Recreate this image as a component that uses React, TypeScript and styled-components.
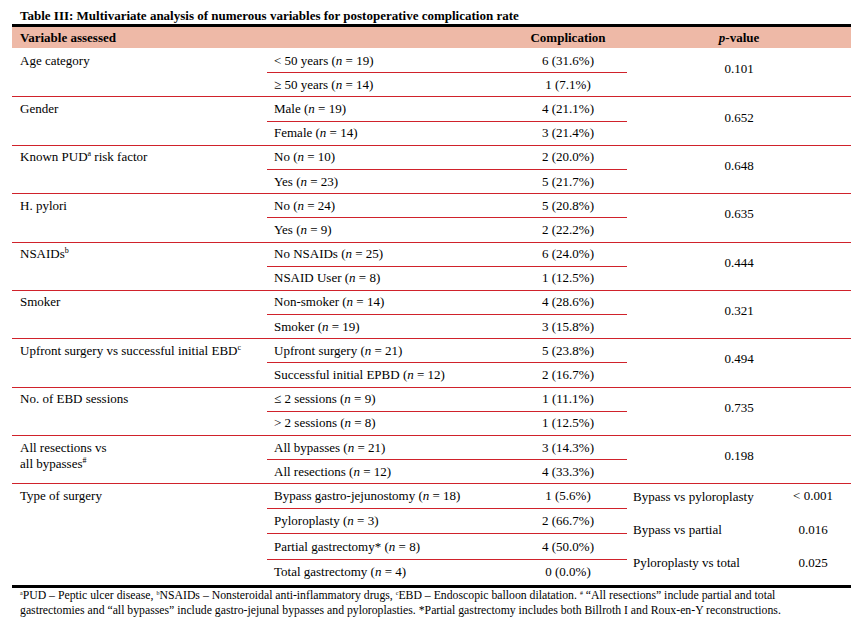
import React from "react";
import styled, { createGlobalStyle } from "styled-components";

const GlobalStyle = createGlobalStyle`
  html, body {
    margin: 0;
    padding: 0;
    background: #ffffff;
  }
  body {
    font-family: "Liberation Serif", "Times New Roman", serif;
    color: #000;
  }
`;

const RED = "#d0222b";
const PINK = "#eeb9a7";

const Page = styled.div`
  width: 839px;
  padding: 7px 12px 0;
`;

const Caption = styled.div`
  font-size: 13px;
  font-weight: bold;
  line-height: 17px;
  padding-left: 8px;
`;

const Frame = styled.div`
  border-top: 3px solid #000;
  border-bottom: 3px solid #000;
`;

const Table = styled.table`
  width: 839px;
  table-layout: fixed;
  border-collapse: separate;
  border-spacing: 0;
  font-size: 13px;
  line-height: 16px;
`;

const HeadRow = styled.tr`
  background: ${PINK};
`;

const HeadCell = styled.th<{ $align: "left" | "center" }>`
  text-align: ${(p) => p.$align};
  font-weight: bold;
  padding: 2.5px 8px;
  height: 16px;
`;

const LabelCell = styled.td<{ $line: boolean }>`
  vertical-align: top;
  padding: 3.6px 8px;
  border-top: 1px solid ${(p) => (p.$line ? RED : "transparent")};
`;

const OptionCell = styled.td<{ $line: boolean }>`
  vertical-align: middle;
  padding: 3.6px 7px;
  white-space: nowrap;
  border-top: 1px solid ${(p) => (p.$line ? RED : "transparent")};
`;

const CountCell = styled(OptionCell)`
  text-align: center;
  padding: 3.6px 0;
`;

const PCell = styled.td<{ $line: boolean }>`
  vertical-align: middle;
  text-align: center;
  padding: 0 0 7px;
  border-top: 1px solid ${(p) => (p.$line ? RED : "transparent")};
`;

const CompareCell = styled.td<{ $line?: boolean; $align: "left" | "center"; $stack?: boolean }>`
  vertical-align: ${(p) => (p.$stack ? "top" : "middle")};
  text-align: ${(p) => p.$align};
  padding: ${(p) => (p.$stack ? "13.5px" : "3px")} ${(p) => (p.$align === "left" ? "0 0 6px" : "0")};
  white-space: nowrap;
  border-top: 1px solid ${(p) => (p.$line ? RED : "transparent")};
`;

const SecondLine = styled.div`
  margin-top: 17px;
`;

const Sup = styled.sup`
  font-size: 8px;
  line-height: 0;
  vertical-align: 5px;
`;

const Notes = styled.div`
  font-size: 11.75px;
  line-height: 15px;
  padding: 0 0 0 8px;
`;

const NoteSup = styled.sup`
  font-size: 6px;
  line-height: 0;
  vertical-align: 4px;
`;

type Group = {
  label: React.ReactNode;
  rows: [React.ReactNode, string][];
  p: string;
};

const groups: Group[] = [
  {
    label: "Age category",
    rows: [
      [<>&lt; 50 years (<i>n</i> = 19)</>, "6 (31.6%)"],
      [<>≥ 50 years (<i>n</i> = 14)</>, "1 (7.1%)"],
    ],
    p: "0.101",
  },
  {
    label: "Gender",
    rows: [
      [<>Male (<i>n</i> = 19)</>, "4 (21.1%)"],
      [<>Female (<i>n</i> = 14)</>, "3 (21.4%)"],
    ],
    p: "0.652",
  },
  {
    label: (
      <>
        Known PUD<Sup>a</Sup> risk factor
      </>
    ),
    rows: [
      [<>No (<i>n</i> = 10)</>, "2 (20.0%)"],
      [<>Yes (<i>n</i> = 23)</>, "5 (21.7%)"],
    ],
    p: "0.648",
  },
  {
    label: "H. pylori",
    rows: [
      [<>No (<i>n</i> = 24)</>, "5 (20.8%)"],
      [<>Yes (<i>n</i> = 9)</>, "2 (22.2%)"],
    ],
    p: "0.635",
  },
  {
    label: (
      <>
        NSAIDs<Sup>b</Sup>
      </>
    ),
    rows: [
      [<>No NSAIDs (<i>n</i> = 25)</>, "6 (24.0%)"],
      [<>NSAID User (<i>n</i> = 8)</>, "1 (12.5%)"],
    ],
    p: "0.444",
  },
  {
    label: "Smoker",
    rows: [
      [<>Non-smoker (<i>n</i> = 14)</>, "4 (28.6%)"],
      [<>Smoker (<i>n</i> = 19)</>, "3 (15.8%)"],
    ],
    p: "0.321",
  },
  {
    label: (
      <>
        Upfront surgery vs successful initial EBD<Sup>c</Sup>
      </>
    ),
    rows: [
      [<>Upfront surgery (<i>n</i> = 21)</>, "5 (23.8%)"],
      [<>Successful initial EPBD (<i>n</i> = 12)</>, "2 (16.7%)"],
    ],
    p: "0.494",
  },
  {
    label: "No. of EBD sessions",
    rows: [
      [<>≤ 2 sessions (<i>n</i> = 9)</>, "1 (11.1%)"],
      [<>&gt; 2 sessions (<i>n</i> = 8)</>, "1 (12.5%)"],
    ],
    p: "0.735",
  },
  {
    label: (
      <>
        All resections vs
        <br />
        all bypasses<Sup>#</Sup>
      </>
    ),
    rows: [
      [<>All bypasses (<i>n</i> = 21)</>, "3 (14.3%)"],
      [<>All resections (<i>n</i> = 12)</>, "4 (33.3%)"],
    ],
    p: "0.198",
  },
];

const surgery: [React.ReactNode, string][] = [
  [<>Bypass gastro-jejunostomy (<i>n</i> = 18)</>, "1 (5.6%)"],
  [<>Pyloroplasty (<i>n</i> = 3)</>, "2 (66.7%)"],
  [<>Partial gastrectomy* (<i>n</i> = 8)</>, "4 (50.0%)"],
  [<>Total gastrectomy (<i>n</i> = 4)</>, "0 (0.0%)"],
];

export default function App() {
  return (
    <>
      <GlobalStyle />
      <Page>
        <Caption>Table III: Multivariate analysis of numerous variables for postoperative complication rate</Caption>
        <Frame>
          <Table>
            <colgroup>
              <col style={{ width: 255 }} />
              <col style={{ width: 242 }} />
              <col style={{ width: 118 }} />
              <col style={{ width: 148 }} />
              <col style={{ width: 76 }} />
            </colgroup>
            <thead>
              <HeadRow>
                <HeadCell $align="left" colSpan={2}>
                  Variable assessed
                </HeadCell>
                <HeadCell $align="center">Complication</HeadCell>
                <HeadCell $align="center" colSpan={2}>
                  <i>p</i>-value
                </HeadCell>
              </HeadRow>
            </thead>
            <tbody>
              {groups.map((g, gi) => (
                <React.Fragment key={gi}>
                  <tr>
                    <LabelCell rowSpan={2} $line={gi > 0}>
                      {g.label}
                    </LabelCell>
                    <OptionCell $line={gi > 0}>{g.rows[0][0]}</OptionCell>
                    <CountCell $line={gi > 0}>{g.rows[0][1]}</CountCell>
                    <PCell rowSpan={2} colSpan={2} $line={gi > 0}>
                      {g.p}
                    </PCell>
                  </tr>
                  <tr>
                    <OptionCell $line>{g.rows[1][0]}</OptionCell>
                    <CountCell $line>{g.rows[1][1]}</CountCell>
                  </tr>
                </React.Fragment>
              ))}
              {surgery.map((r, ri) => (
                <tr key={`s${ri}`}>
                  {ri === 0 && (
                    <LabelCell rowSpan={4} $line>
                      Type of surgery
                    </LabelCell>
                  )}
                  <OptionCell $line>{r[0]}</OptionCell>
                  <CountCell $line>{r[1]}</CountCell>
                  {ri === 0 && (
                    <>
                      <CompareCell $line $align="left">
                        Bypass vs pyloroplasty
                      </CompareCell>
                      <CompareCell $line $align="center">
                        &lt; 0.001
                      </CompareCell>
                    </>
                  )}
                  {ri === 1 && (
                    <>
                      <CompareCell rowSpan={3} $stack $align="left">
                        Bypass vs partial
                        <SecondLine>Pyloroplasty vs total</SecondLine>
                      </CompareCell>
                      <CompareCell rowSpan={3} $stack $align="center">
                        0.016
                        <SecondLine>0.025</SecondLine>
                      </CompareCell>
                    </>
                  )}
                </tr>
              ))}
            </tbody>
          </Table>
        </Frame>
        <Notes>
          <NoteSup>a</NoteSup>PUD – Peptic ulcer disease, <NoteSup>b</NoteSup>NSAIDs – Nonsteroidal anti-inflammatory drugs,{" "}
          <NoteSup>c</NoteSup>EBD – Endoscopic balloon dilatation. <NoteSup>#</NoteSup> “All resections” include partial and total
          <br />
          gastrectomies and “all bypasses” include gastro-jejunal bypasses and pyloroplasties. *Partial gastrectomy includes both
          Billroth I and Roux-en-Y reconstructions.
        </Notes>
      </Page>
    </>
  );
}
